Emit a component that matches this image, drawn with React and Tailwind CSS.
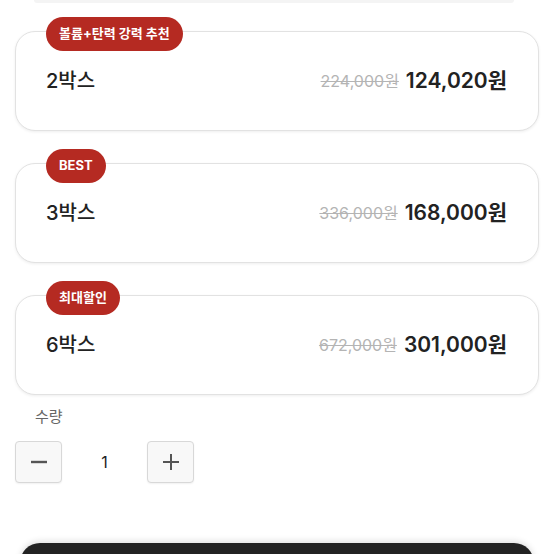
const options = [
  { badge: "볼륨+탄력 강력 추천", name: "2박스", original: "224,000원", price: "124,020원" },
  { badge: "BEST", name: "3박스", original: "336,000원", price: "168,000원" },
  { badge: "최대할인", name: "6박스", original: "672,000원", price: "301,000원" },
];

function OptionCard({ option }) {
  return (
    <div className="relative h-[100px] rounded-[20px] border border-[#e2e2e2] bg-white shadow-[0_1px_3px_rgba(0,0,0,0.07)]">
      <span className="absolute -top-[15px] left-[30px] flex h-[34px] items-center rounded-full bg-[#b52a22] px-[13px] text-[13px] font-bold text-white">
        {option.badge}
      </span>
      <div className="flex h-full items-center justify-between pl-[30px] pr-[31px]">
        <span className="text-[20px] font-medium text-[#222]">{option.name}</span>
        <div className="flex items-center gap-[7px]">
          <span className="text-[16px] text-[#b4b4b4] line-through">{option.original}</span>
          <span className="text-[21px] font-semibold text-[#222]">{option.price}</span>
        </div>
      </div>
    </div>
  );
}

export default function App() {
  return (
    <div
      className="h-[554px] overflow-hidden bg-white"
      style={{ fontFamily: 'Inter, "Noto Sans CJK KR", sans-serif' }}
    >
      <div className="ml-[34px] h-[3px] w-[480px] rounded-b bg-[#f4f4f4]" />
      <div className="flex flex-col gap-[32px] px-[15px] pt-[28px]">
        {options.map((o) => (
          <OptionCard key={o.name} option={o} />
        ))}
      </div>
      <div className="px-[15px]">
        <div className="mt-[11px] pl-[20px] text-[15px] leading-[22px] text-[#666]">수량</div>
        <div className="mt-[13px] flex items-center">
          <button className="flex h-[42px] w-[47px] items-center justify-center rounded-[4px] border border-[#d8d8d8] bg-[#f8f8f8] shadow-[0_1px_2px_rgba(0,0,0,0.06)]">
            <svg width="20" height="20" viewBox="0 0 20 20">
              <path d="M2 10h16" stroke="#555" strokeWidth="2.4" />
            </svg>
          </button>
          <span className="w-[85px] text-center text-[16px] text-[#222]">1</span>
          <button className="flex h-[42px] w-[47px] items-center justify-center rounded-[4px] border border-[#d8d8d8] bg-[#f8f8f8] shadow-[0_1px_2px_rgba(0,0,0,0.06)]">
            <svg width="20" height="20" viewBox="0 0 20 20">
              <path d="M2 10h16M10 2v16" stroke="#555" strokeWidth="2" />
            </svg>
          </button>
        </div>
      </div>
      <div className="mx-[20px] mt-[60px] h-[40px] rounded-[28px] bg-[#222] shadow-[0_-2px_6px_rgba(0,0,0,0.12)]" />
    </div>
  );
}
